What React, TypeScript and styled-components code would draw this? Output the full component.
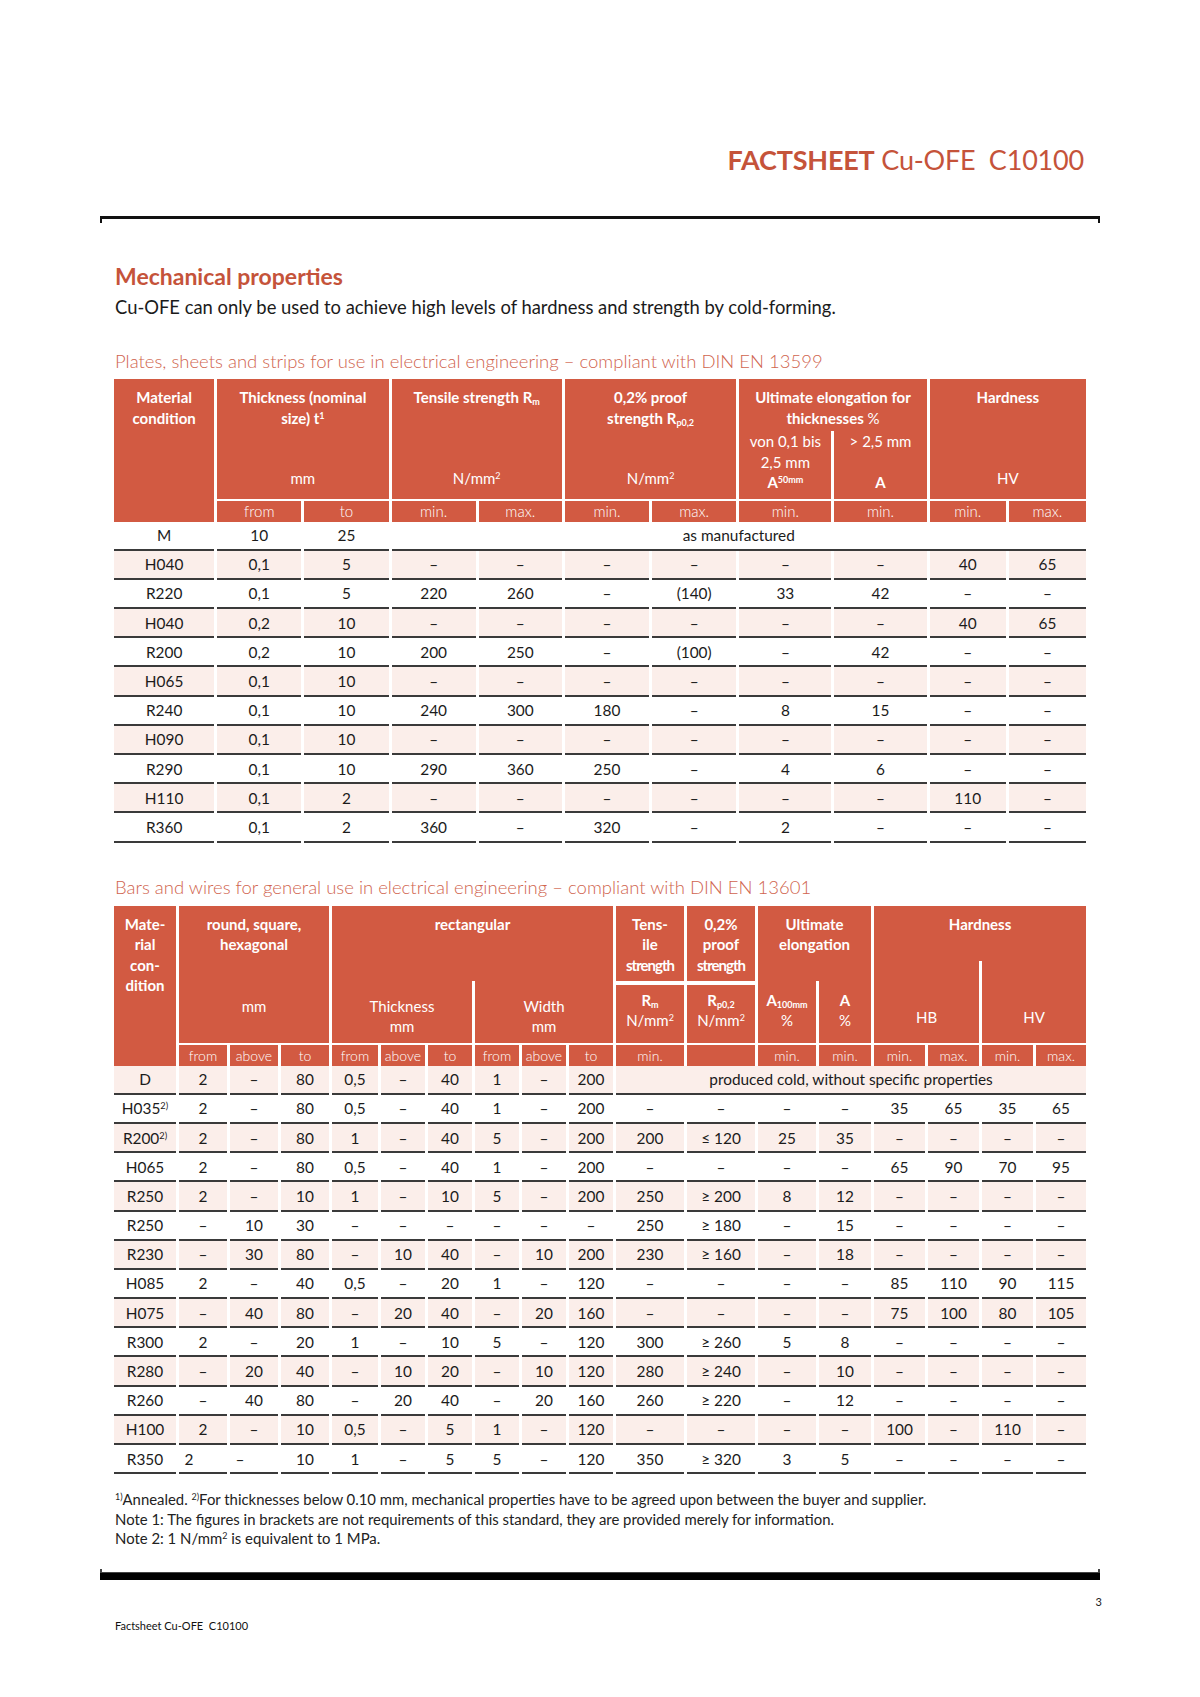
import React from "react";
import styled, { createGlobalStyle } from "styled-components";

const RED = "#d25a42";
const PINK = "#fbeeea";
const TITLE = "#c5533a";
const SUBTITLE = "#d0644e";
const LINE = "#3a3a3a";

const Global = createGlobalStyle`
  html, body { margin: 0; padding: 0; background: #fff; }
  body { font-family: Lato, "Open Sans", sans-serif; color: #1b1b1b; }
  sup { font-size: 0.6em; vertical-align: 0.55em; line-height: 0; }
  sub { font-size: 0.6em; vertical-align: -0.25em; line-height: 0; }
`;

const Page = styled.div`
  width: 1200px;
  min-height: 1697px;
  box-sizing: border-box;
  padding-top: 143px;
`;

const TitleBar = styled.h1`
  margin: 0 116px 0 0;
  text-align: right;
  font-size: 27px;
  letter-spacing: -0.2px;
  line-height: 34px;
  font-weight: 400;
  color: ${TITLE};
  b { font-weight: 700; }
`;

const TopRule = styled.div`
  margin: 39px 100px 0;
  height: 4px;
  border: 2px solid #111;
  border-top-width: 3px;
  border-bottom: none;
`;

const Content = styled.main`
  padding: 0 114px 0 114px;
`;

const Heading = styled.h2`
  margin: 40px 0 0 1px;
  font-size: 23px;
  line-height: 26px;
  font-weight: 700;
  color: ${TITLE};
`;

const Lead = styled.p`
  margin: 6px 0 0 1px;
  font-size: 18.4px;
  line-height: 24px;
`;

const TableTitle = styled.h3<{ $top: number }>`
  margin: ${(p) => p.$top}px 0 0 1px;
  font-size: 18.5px;
  line-height: 24px;
  font-weight: 300;
  color: ${SUBTITLE};
`;

const Table = styled.table<{ $top: number }>`
  width: calc(100% + 6px);
  margin: ${(p) => p.$top}px -3px 0;
  border-collapse: separate;
  border-spacing: 3px 0;
  table-layout: fixed;
`;

const HeadRow = styled.tr<{ $h: number }>`
  height: ${(p) => p.$h}px;
`;

const Th = styled.th<{ $pad?: number }>`
  background: ${RED};
  color: #fff;
  font-weight: 700;
  font-size: 15px;
  line-height: 20.5px;
  padding: ${(p) => p.$pad ?? 8}px 2px 0;
  vertical-align: top;
  text-align: center;
  position: relative;
`;

const SplitUp = styled(Th)<{ $len: number }>`
  &::after {
    content: "";
    position: absolute;
    left: calc(50% - 1px);
    bottom: 0;
    width: 3px;
    height: ${(p) => p.$len}px;
    background: #fff;
  }
`;

const UnitCell = styled.th<{ $pb?: number; $gap?: number }>`
  background: ${RED};
  color: #fff;
  font-weight: 400;
  font-size: 15px;
  line-height: 20.5px;
  padding: 0 2px ${(p) => p.$pb ?? 10}px;
  vertical-align: bottom;
  text-align: center;
  border-top: ${(p) => p.$gap ?? 0}px solid #fff;
  b { font-weight: 700; }
`;

const UnitLine = styled.div<{ $mt: number }>`
  margin-top: ${(p) => p.$mt}px;
  font-weight: 400;
`;

const Narrow = styled.span`
  letter-spacing: -1px;
`;

const SubHead = styled.th<{ $small?: boolean }>`
  background: ${RED};
  color: #fff;
  font-weight: 300;
  font-size: ${(p) => (p.$small ? 14 : 15)}px;
  line-height: 21px;
  height: 21px;
  padding: 0;
  border-top: 2px solid #fff;
  text-align: center;
`;

const Row = styled.tr<{ $shade: boolean }>`
  background: ${(p) => (p.$shade ? PINK : "transparent")};
`;

const Td = styled.td<{ $offset?: number }>`
  height: 27.2px;
  padding: 0;
  padding-right: ${(p) => (p.$offset && p.$offset < 0 ? -p.$offset * 2 : 0)}px;
  font-size: 15.4px;
  line-height: 20px;
  text-align: center;
  vertical-align: middle;
  border-bottom: 2px solid ${LINE};
  white-space: nowrap;
`;

const Notes = styled.div`
  margin: 16px 0 0 1px;
  font-size: 14.9px;
  line-height: 19.5px;
  color: #222;
  p { margin: 0; }
`;

const BottomTicks = styled.div`
  margin: 20px 100px 0;
  height: 3px;
  border: 2px solid #444;
  border-top: none;
  border-bottom-width: 1px;
`;

const BottomBar = styled.div`
  margin: 0 100px;
  height: 7px;
  background: #000;
`;

const PageNo = styled.div`
  margin: 15px 98px 0 0;
  text-align: right;
  font-size: 11px;
  line-height: 14px;
`;

const FooterText = styled.div`
  margin: 10px 0 0 115px;
  font-size: 11px;
  line-height: 14px;
  color: #111;
`;

const dash = "–";

const T1: string[][] = [
  ["H040", "0,1", "5", dash, dash, dash, dash, dash, dash, "40", "65"],
  ["R220", "0,1", "5", "220", "260", dash, "(140)", "33", "42", dash, dash],
  ["H040", "0,2", "10", dash, dash, dash, dash, dash, dash, "40", "65"],
  ["R200", "0,2", "10", "200", "250", dash, "(100)", dash, "42", dash, dash],
  ["H065", "0,1", "10", dash, dash, dash, dash, dash, dash, dash, dash],
  ["R240", "0,1", "10", "240", "300", "180", dash, "8", "15", dash, dash],
  ["H090", "0,1", "10", dash, dash, dash, dash, dash, dash, dash, dash],
  ["R290", "0,1", "10", "290", "360", "250", dash, "4", "6", dash, dash],
  ["H110", "0,1", "2", dash, dash, dash, dash, dash, dash, "110", dash],
  ["R360", "0,1", "2", "360", dash, "320", dash, "2", dash, dash, dash],
];

type R2 = { name: string; sup?: string; cells: string[]; offsets?: Record<number, number> };

const T2: R2[] = [
  { name: "H035", sup: "2)", cells: ["2", dash, "80", "0,5", dash, "40", "1", dash, "200", dash, dash, dash, dash, "35", "65", "35", "65"] },
  { name: "R200", sup: "2)", cells: ["2", dash, "80", "1", dash, "40", "5", dash, "200", "200", "≤ 120", "25", "35", dash, dash, dash, dash] },
  { name: "H065", cells: ["2", dash, "80", "0,5", dash, "40", "1", dash, "200", dash, dash, dash, dash, "65", "90", "70", "95"] },
  { name: "R250", cells: ["2", dash, "10", "1", dash, "10", "5", dash, "200", "250", "≥ 200", "8", "12", dash, dash, dash, dash] },
  { name: "R250", cells: [dash, "10", "30", dash, dash, dash, dash, dash, dash, "250", "≥ 180", dash, "15", dash, dash, dash, dash] },
  { name: "R230", cells: [dash, "30", "80", dash, "10", "40", dash, "10", "200", "230", "≥ 160", dash, "18", dash, dash, dash, dash] },
  { name: "H085", cells: ["2", dash, "40", "0,5", dash, "20", "1", dash, "120", dash, dash, dash, dash, "85", "110", "90", "115"] },
  { name: "H075", cells: [dash, "40", "80", dash, "20", "40", dash, "20", "160", dash, dash, dash, dash, "75", "100", "80", "105"] },
  { name: "R300", cells: ["2", dash, "20", "1", dash, "10", "5", dash, "120", "300", "≥ 260", "5", "8", dash, dash, dash, dash] },
  { name: "R280", cells: [dash, "20", "40", dash, "10", "20", dash, "10", "120", "280", "≥ 240", dash, "10", dash, dash, dash, dash] },
  { name: "R260", cells: [dash, "40", "80", dash, "20", "40", dash, "20", "160", "260", "≥ 220", dash, "12", dash, dash, dash, dash] },
  { name: "H100", cells: ["2", dash, "10", "0,5", dash, "5", "1", dash, "120", dash, dash, dash, dash, "100", dash, "110", dash] },
  { name: "R350", cells: ["2", dash, "10", "1", dash, "5", "5", dash, "120", "350", "≥ 320", "3", "5", dash, dash, dash, dash], offsets: { 0: -14, 1: -14 } },
];

const COLS1 = [100, 84, 84, 84, 83, 84, 84, 92, 92, 76, 77];
const COLS2 = [62, 48, 48, 48, 46, 44, 44, 44, 44, 44, 68, 68, 58, 52, 51, 51, 51, 50];

const Cols = ({ widths }: { widths: number[] }) => (
  <colgroup>
    {widths.map((w, i) => (
      <col key={i} style={{ width: w }} />
    ))}
  </colgroup>
);

const PlatesTable = () => (
  <Table $top={6}>
    <Cols widths={COLS1} />
    <thead>
      <HeadRow $h={52}>
        <Th rowSpan={3}>
          Material
          <br />
          condition
        </Th>
        <Th colSpan={2}>
          Thickness (nominal
          <br />
          size) t<sup>1</sup>
        </Th>
        <Th colSpan={2}>
          Tensile strength R<sub>m</sub>
        </Th>
        <Th colSpan={2}>
          0,2% proof
          <br />
          strength R<sub>p0,2</sub>
        </Th>
        <Th colSpan={2}>
          Ultimate elongation for
          <br />
          thicknesses <span style={{ fontWeight: 400 }}>%</span>
        </Th>
        <Th colSpan={2}>Hardness</Th>
      </HeadRow>
      <HeadRow $h={66}>
        <UnitCell colSpan={2}>mm</UnitCell>
        <UnitCell colSpan={2}>
          N/mm<sup>2</sup>
        </UnitCell>
        <UnitCell colSpan={2}>
          N/mm<sup>2</sup>
        </UnitCell>
        <UnitCell $pb={6}>
          von 0,1 bis
          <br />
          2,5 mm
          <br />
          <b>
            A<sup>50mm</sup>
          </b>
        </UnitCell>
        <UnitCell $pb={6}>
          &gt; 2,5 mm
          <br />
          <br />
          <b>A</b>
        </UnitCell>
        <UnitCell colSpan={2}>HV</UnitCell>
      </HeadRow>
      <tr>
        {["from", "to", "min.", "max.", "min.", "max.", "min.", "min.", "min.", "max."].map((t, i) => (
          <SubHead key={i}>{t}</SubHead>
        ))}
      </tr>
    </thead>
    <tbody>
      <Row $shade={false}>
        <Td>M</Td>
        <Td>10</Td>
        <Td>25</Td>
        <Td colSpan={8}>as manufactured</Td>
      </Row>
      {T1.map((r, i) => (
        <Row key={i} $shade={i % 2 === 0}>
          {r.map((c, j) => (
            <Td key={j}>{c}</Td>
          ))}
        </Row>
      ))}
    </tbody>
  </Table>
);

const BarsTable = () => (
  <Table $top={7}>
    <Cols widths={COLS2} />
    <thead>
      <HeadRow $h={75}>
        <Th rowSpan={3}>
          Mate-
          <br />
          rial
          <br />
          con-
          <br />
          dition
        </Th>
        <Th colSpan={3} rowSpan={2}>
          round, square,
          <br />
          hexagonal
          <UnitLine $mt={41}>mm</UnitLine>
        </Th>
        <Th colSpan={6}>rectangular</Th>
        <Th>
          Tens-
          <br />
          ile
          <br />
          <Narrow>strength</Narrow>
        </Th>
        <Th>
          0,2%
          <br />
          proof
          <br />
          <Narrow>strength</Narrow>
        </Th>
        <Th colSpan={2}>
          Ultimate
          <br />
          elongation
        </Th>
        <SplitUp colSpan={4} $len={20}>
          Hardness
        </SplitUp>
      </HeadRow>
      <HeadRow $h={62}>
        <UnitCell colSpan={3} $pb={6}>
          Thickness
          <br />
          mm
        </UnitCell>
        <UnitCell colSpan={3} $pb={6}>
          Width
          <br />
          mm
        </UnitCell>
        <UnitCell $pb={12} $gap={4}>
          <b>
            R<sub>m</sub>
          </b>
          <br />
          N/mm<sup>2</sup>
        </UnitCell>
        <UnitCell $pb={12} $gap={4}>
          <b>
            R<sub>p0,2</sub>
          </b>
          <br />
          N/mm<sup>2</sup>
        </UnitCell>
        <UnitCell $pb={12}>
          <b>
            A<sub>100mm</sub>
          </b>
          <br />%
        </UnitCell>
        <UnitCell $pb={12}>
          <b>A</b>
          <br />%
        </UnitCell>
        <UnitCell colSpan={2} $pb={15}>
          HB
        </UnitCell>
        <UnitCell colSpan={2} $pb={15}>
          HV
        </UnitCell>
      </HeadRow>
      <tr>
        {["from", "above", "to", "from", "above", "to", "from", "above", "to", "min.", "", "min.", "min.", "min.", "max.", "min.", "max."].map(
          (t, i) => (
            <SubHead key={i} $small>
              {t}
            </SubHead>
          )
        )}
      </tr>
    </thead>
    <tbody>
      <Row $shade>
        <Td>D</Td>
        {["2", dash, "80", "0,5", dash, "40", "1", dash, "200"].map((c, j) => (
          <Td key={j}>{c}</Td>
        ))}
        <Td colSpan={8}>produced cold, without specific properties</Td>
      </Row>
      {T2.map((r, i) => (
        <Row key={i} $shade={i % 2 === 1}>
          <Td>
            {r.name}
            {r.sup && <sup>{r.sup}</sup>}
          </Td>
          {r.cells.map((c, j) => (
            <Td key={j} $offset={r.offsets?.[j]}>
              {c}
            </Td>
          ))}
        </Row>
      ))}
    </tbody>
  </Table>
);

export default function App() {
  return (
    <Page>
      <Global />
      <TitleBar>
        <b>FACTSHEET</b> Cu-OFE&nbsp; C10100
      </TitleBar>
      <TopRule />
      <Content>
        <Heading>Mechanical properties</Heading>
        <Lead>Cu-OFE can only be used to achieve high levels of hardness and strength by cold-forming.</Lead>
        <TableTitle $top={30}>
          Plates, sheets and strips for use in electrical engineering – compliant with DIN EN 13599
        </TableTitle>
        <PlatesTable />
        <TableTitle $top={32}>
          Bars and wires for general use in electrical engineering – compliant with DIN EN 13601
        </TableTitle>
        <BarsTable />
        <Notes>
          <p>
            <sup>1)</sup>Annealed. <sup>2)</sup>For thicknesses below 0.10 mm, mechanical properties have to be agreed
            upon between the buyer and supplier.
          </p>
          <p>Note 1: The figures in brackets are not requirements of this standard, they are provided merely for information.</p>
          <p>
            Note 2: 1 N/mm<sup>2</sup> is equivalent to 1 MPa.
          </p>
        </Notes>
      </Content>
      <BottomTicks />
      <BottomBar />
      <PageNo>3</PageNo>
      <FooterText>Factsheet Cu-OFE&nbsp; C10100</FooterText>
    </Page>
  );
}
